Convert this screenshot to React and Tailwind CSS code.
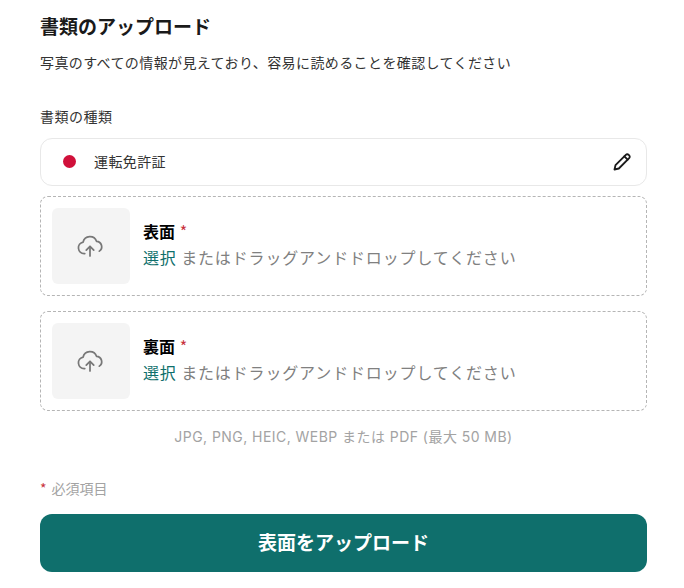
import React from "react";

function CloudUp() {
  return (
    <svg width="28" height="28" viewBox="0 0 24 24" fill="none" stroke="#777" strokeWidth="1.5" strokeLinecap="round" strokeLinejoin="round">
      <path d="M7.5 18.5H7a5 5 0 0 1-.9-9.9A6 6 0 0 1 17.6 8a4.6 4.6 0 0 1 2.4 8.4" />
      <path d="M12 20.5v-8" />
      <path d="M8.8 15.5 12 12.3l3.2 3.2" />
    </svg>
  );
}

function Drop({ label, mt }) {
  return (
    <div className={`flex h-[100px] items-center gap-[13px] rounded-lg border border-dashed border-[#b5b5b5] pl-[11px] ${mt}`}>
      <div className="flex h-[76px] w-[78px] items-center justify-center rounded-md bg-[#f4f4f4] pr-[2px]">
        <CloudUp />
      </div>
      <div className="flex flex-col pb-[3px]">
        <div className="text-[16px] leading-[26px] font-bold text-black">
          {label} <span className="ml-[1px] font-normal text-[#c8323c]">*</span>
        </div>
        <div className="text-[16px] leading-[27px] tracking-[0.85px] text-[#808080]">
          <span className="text-[#0f6f6c]">選択</span> またはドラッグアンドドロップしてください
        </div>
      </div>
    </div>
  );
}

export default function App() {
  return (
    <div className="h-[588px] w-[684px] overflow-hidden bg-white pt-[14px] pr-[37px] pl-[40px] font-['Noto_Sans_CJK_JP','Noto_Sans',sans-serif]">
      <h1 className="text-[19px] leading-[24px] font-bold text-[#1a1a1a]">書類のアップロード</h1>
      <p className="mt-[13px] text-[14px] leading-[22px] tracking-[0.4px] text-[#333]">写真のすべての情報が見えており、容易に読めることを確認してください</p>
      <div className="mt-[32px] text-[14px] leading-[22px] tracking-[0.5px] text-[#333]">書類の種類</div>
      <div className="mt-[11px] flex h-[48px] items-center rounded-xl border border-[#e8e8e8] pr-[14px] pb-[1px] pl-[22px]">
        <span className="h-[13px] w-[13px] rounded-full bg-[#d0103a]" />
        <span className="ml-[18px] flex-1 text-[14px] tracking-[0.4px] text-[#333]">運転免許証</span>
        <svg width="20" height="20" viewBox="0 0 24 24" fill="none" stroke="#1a1a1a" strokeWidth="2.2" strokeLinejoin="round" strokeLinecap="round">
          <path d="M3 21l1.2-5.2L16.6 3.4a2.4 2.4 0 0 1 3.4 0l.6.6a2.4 2.4 0 0 1 0 3.4L8.2 19.8 3 21z" />
          <path d="M14.8 5.2l4 4" />
        </svg>
      </div>
      <Drop label="表面" mt="mt-[10px]" />
      <Drop label="裏面" mt="mt-[15px]" />
      <div className="mt-[16px] text-center font-['Inter','Noto_Sans_CJK_JP',sans-serif] text-[14px] leading-[20px] tracking-[0.45px] text-[#a3a3a3]">JPG, PNG, HEIC, WEBP または PDF (最大 50 MB)</div>
      <div className="mt-[31px] text-[14px] leading-[20px] text-[#a3a3a3]">
        <span className="text-[#c8323c]">*</span><span className="ml-[5px]">必須項目</span>
      </div>
      <button className="mt-[16px] flex h-[58px] w-full items-center justify-center rounded-xl bg-[#0f6f6c] pb-[2px] text-[19px] font-bold text-white">表面をアップロード</button>
    </div>
  );
}
